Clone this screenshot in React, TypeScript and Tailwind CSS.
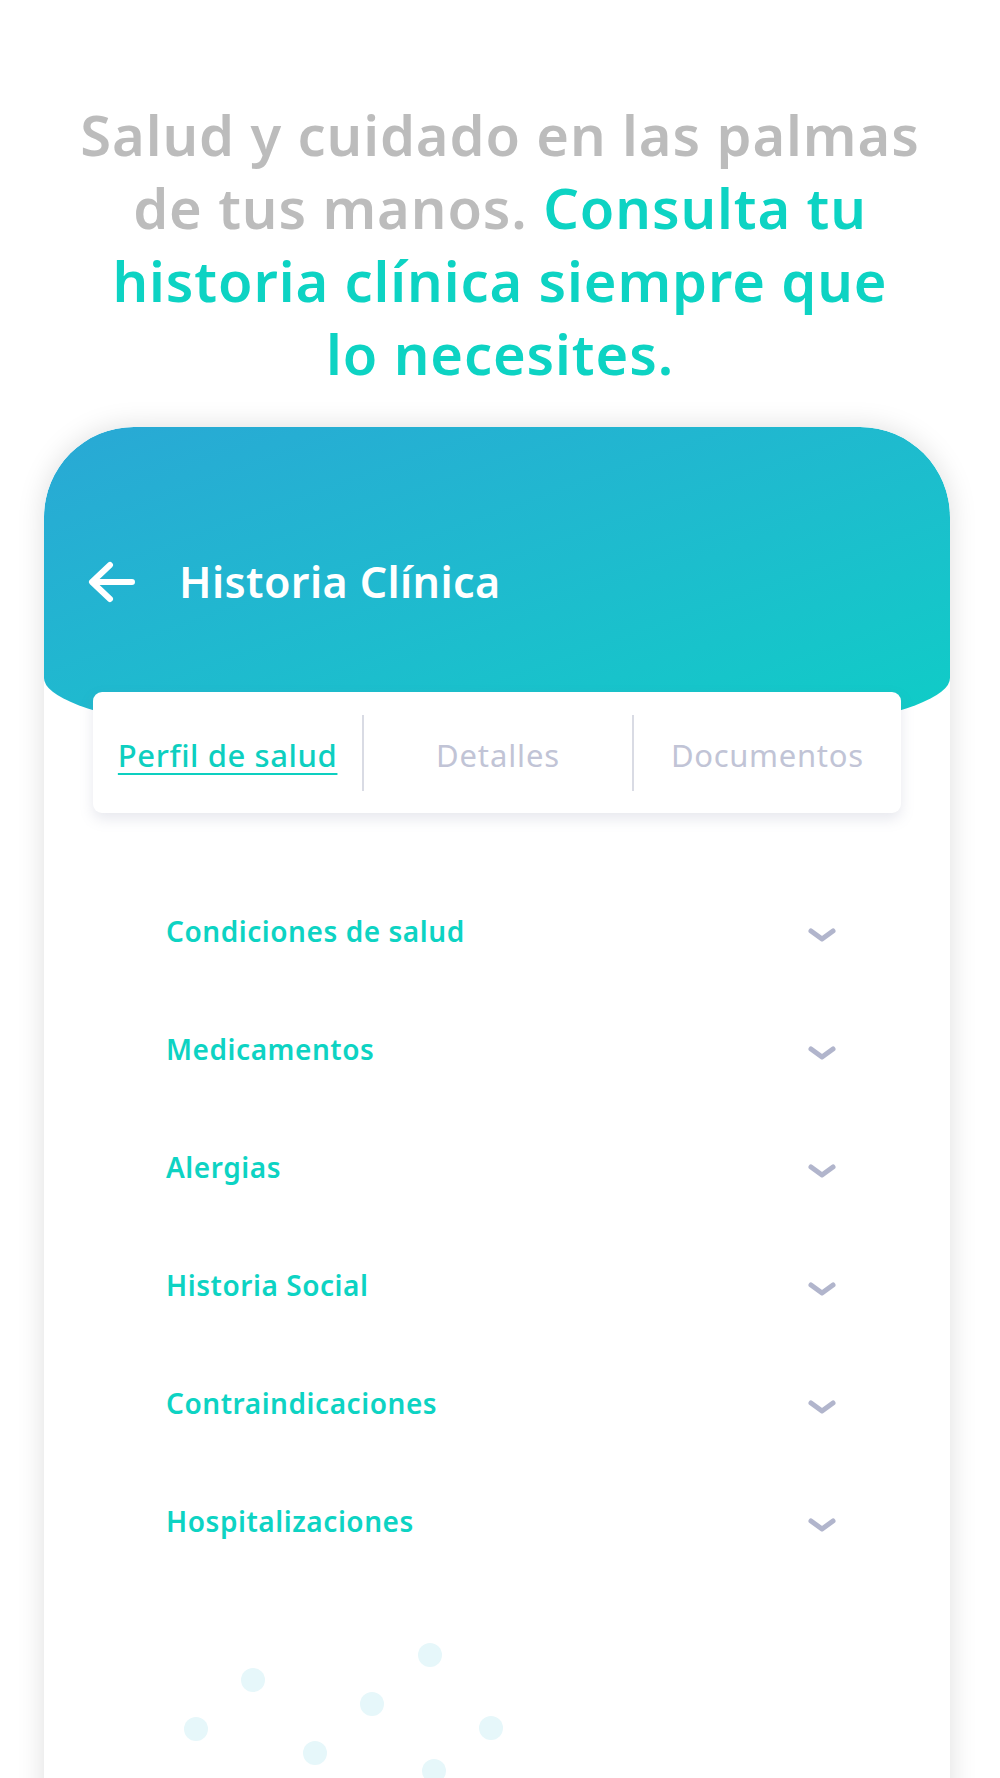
import React from "react";

const items = [
  "Condiciones de salud",
  "Medicamentos",
  "Alergias",
  "Historia Social",
  "Contraindicaciones",
  "Hospitalizaciones",
];

function Chevron() {
  return (
    <svg width="28" height="14" viewBox="0 0 28 14" fill="none" className="mt-[7px]">
      <path d="M3 3 L14 11 L25 3" stroke="#b1b5cc" strokeWidth="5" strokeLinecap="round" strokeLinejoin="round" />
    </svg>
  );
}

function BackArrow() {
  return (
    <svg width="48" height="42" viewBox="0 0 48 42" fill="none">
      <path d="M44 21 H5 M22 4 L4 21 L22 38" stroke="#ffffff" strokeWidth="6" strokeLinecap="round" strokeLinejoin="round" />
    </svg>
  );
}

export default function App() {
  const dots: [number, number][] = [
    [209, 100],
    [386, 75],
    [328, 124],
    [152, 149],
    [271, 173],
    [447, 148],
    [390, 191],
  ];
  return (
    <div
      className="w-[1000px] h-[1778px] overflow-hidden bg-white"
      style={{ fontFamily: '"Noto Sans", "Open Sans", sans-serif' }}
    >
      <h1 className="pt-[98px] text-center text-[56px] leading-[73px] font-semibold tracking-[0.9px]">
        <span className="text-[#bcbcbc]">
          Salud y cuidado en las palmas
          <br />
          de tus manos.{" "}
        </span>
        <span className="text-[#0dd3c3]">
          Consulta tu
          <br />
          historia clínica siempre que
          <br />
          lo necesites.
        </span>
      </h1>

      <div className="mt-[37px] ml-[44px] w-[906px] h-[1400px] bg-white rounded-t-[90px] shadow-[0_0_28px_rgba(0,0,0,0.13)] overflow-hidden">
        <div className="h-[322px] pt-[125px] px-[44px] bg-gradient-to-br from-[#29a8d5] to-[#0ccec6] rounded-t-[90px] rounded-b-[50%_71px]">
          <div className="flex items-center h-[60px]">
            <BackArrow />
            <span className="ml-[43px] text-white text-[43px] font-semibold tracking-[0.4px]">Historia Clínica</span>
          </div>
        </div>

        <div className="relative z-10 -mt-[57px] mx-[49px] h-[121px] bg-white rounded-[9px] shadow-[0_6px_14px_rgba(120,130,160,0.18)] grid grid-cols-3 items-center">
          <div className="flex items-center justify-center h-[76px] pt-[6px]">
            <span className="text-[31px] font-medium tracking-[0.6px] text-[#0dcfc0] underline underline-offset-[6px] decoration-[2px]">
              Perfil de salud
            </span>
          </div>
          <div className="flex items-center justify-center h-[76px] pt-[6px] border-l-2 border-[#d9dbe4]">
            <span className="text-[31px] tracking-[0.9px] text-[#c1c4d6]">Detalles</span>
          </div>
          <div className="flex items-center justify-center h-[76px] pt-[6px] border-l-2 border-[#d9dbe4]">
            <span className="text-[31px] tracking-[0.7px] text-[#c1c4d6]">Documentos</span>
          </div>
        </div>

        <div className="mt-[59px] pl-[122px] pr-[114px]">
          {items.map((t) => (
            <div key={t} className="h-[118px] flex items-center justify-between">
              <span className="text-[28px] font-semibold tracking-[0.55px] text-[#0dd3c3]">{t}</span>
              <Chevron />
            </div>
          ))}
        </div>

        <svg width="906" height="220" viewBox="0 0 906 220" className="block">
          {dots.map(([x, y], i) => (
            <circle key={i} cx={x} cy={y} r="12" fill="#e6f7fa" />
          ))}
        </svg>
      </div>
    </div>
  );
}
